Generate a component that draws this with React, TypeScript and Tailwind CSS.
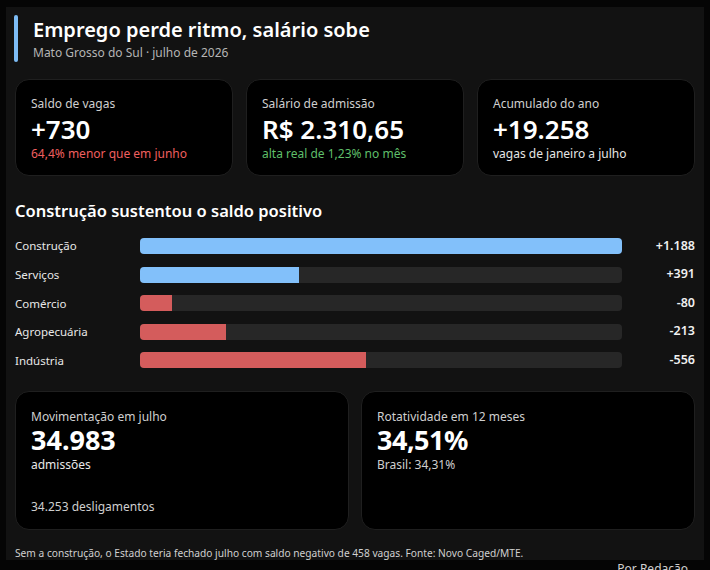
const sectors = [
  { name: 'Construção', value: 1188, label: '+1.188' },
  { name: 'Serviços', value: 391, label: '+391' },
  { name: 'Comércio', value: -80, label: '-80' },
  { name: 'Agropecuária', value: -213, label: '-213' },
  { name: 'Indústria', value: -556, label: '-556' },
];

const maxAbs = 1188;

function KpiCard({ label, value, note, noteClass }: { label: string; value: string; note: string; noteClass: string }) {
  return (
    <div className="flex h-[97px] flex-col rounded-[14px] border border-[#1f1f1f] bg-black px-[15px] pt-[15px]">
      <p className="text-[12px] leading-[18px] text-[#cfcfcf]">{label}</p>
      <p className="text-[26px] leading-[32px] font-semibold text-white">{value}</p>
      <p className={`text-[12px] leading-[18px] ${noteClass}`}>{note}</p>
    </div>
  );
}

export default function App() {
  return (
    <div className="min-h-[570px] bg-[#050505] px-[6px] pt-[7px] font-['Noto_Sans',sans-serif]">
      <div className="flex h-[553px] flex-col bg-[#121212] px-[9px] pt-[8px]">
        <header className="-ml-[1px] flex items-stretch gap-[15px]">
          <div className="w-[4px] rounded-sm bg-[#7dbcf5]" />
          <div className="py-[1px]">
            <h1 className="text-[20px] leading-[28px] font-semibold text-white">
              Emprego perde ritmo, salário sobe
            </h1>
            <p className="text-[12px] leading-[17px] text-[#b5b5b5]">Mato Grosso do Sul · julho de 2026</p>
          </div>
        </header>

        <div className="mt-[17px] grid grid-cols-3 gap-[13px]">
          <KpiCard label="Saldo de vagas" value="+730" note="64,4% menor que em junho" noteClass="text-[#ef5f5f]" />
          <KpiCard
            label="Salário de admissão"
            value="R$ 2.310,65"
            note="alta real de 1,23% no mês"
            noteClass="text-[#5fbf6a]"
          />
          <KpiCard
            label="Acumulado do ano"
            value="+19.258"
            note="vagas de janeiro a julho"
            noteClass="text-[#e6e6e6]"
          />
        </div>

        <h2 className="mt-[23px] text-[16.5px] leading-[24px] font-semibold text-white">
          Construção sustentou o saldo positivo
        </h2>

        <div className="mt-[15px] flex flex-col gap-[12.6px]">
          {sectors.map((s) => (
            <div key={s.name} className="flex h-[16px] items-center">
              <span className="w-[125px] text-[11.5px] text-[#e8e8e8]">{s.name}</span>
              <div className="h-[16px] w-[482px] overflow-hidden rounded-[4px] bg-[#272727]">
                <div
                  className={`h-full ${s.value > 0 ? 'bg-[#82c0fa]' : 'bg-[#d45c5c]'}`}
                  style={{ width: `${(Math.abs(s.value) / maxAbs) * 100}%` }}
                />
              </div>
              <span className="flex-1 text-right text-[12.5px] font-semibold text-[#f0f0f0]">{s.label}</span>
            </div>
          ))}
        </div>

        <div className="mt-[23px] grid grid-cols-2 gap-[12px]">
          <div className="flex h-[139px] flex-col rounded-[14px] border border-[#1f1f1f] bg-black px-[15px] pt-[16px]">
            <p className="text-[12px] leading-[18px] text-[#cfcfcf]">Movimentação em julho</p>
            <p className="-mt-[2px] text-[27px] leading-[32px] font-bold text-white">34.983</p>
            <p className="text-[12px] leading-[18px] text-[#e8e8e8]">admissões</p>
            <p className="mt-auto pb-[13px] text-[12px] leading-[18px] text-[#cfcfcf]">34.253 desligamentos</p>
          </div>
          <div className="flex h-[139px] flex-col rounded-[14px] border border-[#1f1f1f] bg-black px-[15px] pt-[16px]">
            <p className="text-[12px] leading-[18px] text-[#cfcfcf]">Rotatividade em 12 meses</p>
            <p className="-mt-[2px] text-[27px] leading-[32px] font-bold tracking-[-0.5px] text-white">34,51%</p>
            <p className="text-[12px] leading-[18px] text-[#cfcfcf]">Brasil: 34,31%</p>
          </div>
        </div>

        <p className="mt-[16px] text-[10.2px] leading-[15px] text-[#d0d0d0]">
          Sem a construção, o Estado teria fechado julho com saldo negativo de 458 vagas. Fonte: Novo Caged/MTE.
        </p>
      </div>
      <p className="pr-[16px] pt-[1px] text-right text-[12px] leading-[16px] text-[#cfcfcf]">Por Redação</p>
    </div>
  );
}
